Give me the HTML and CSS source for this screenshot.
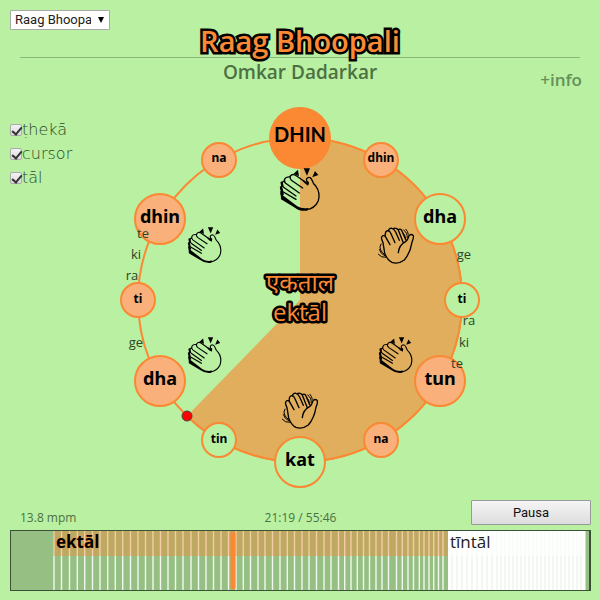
FILE: index.html
```html
<!DOCTYPE html>
<html lang="es">
<head>
<meta charset="utf-8">
<title>Raag Bhoopali</title>
<link rel="stylesheet" href="styles.css">
</head>
<body>
<header class="header">
  <div class="picker">
    <select class="picker-select" aria-label="Raag">
      <option>Raag Bhoopali</option>
    </select>
  </div>
  <h1 class="title">Raag Bhoopali</h1>
  <div class="credits">
    <h2 class="artist">Omkar Dadarkar</h2>
    <a class="info" href="#info">+info</a>
  </div>
</header>

<main class="stage">
  <div class="options">
    <label class="option"><input class="check" type="checkbox" checked>ṭhekā</label>
    <label class="option"><input class="check" type="checkbox" checked>cursor</label>
    <label class="option"><input class="check" type="checkbox" checked>tāl</label>
  </div>
  <svg class="wheel" viewBox="110 100 380 390" role="img" aria-label="ektāl">
    <defs>
      <g id="clap" class="hand">
        <path class="solid" d="M41 17L54 5L57 25ZM71 1H90L81 23ZM97 28L105 9L115 21Z"/>
        <path d="M84 48L50 24Q38 15 31 24Q28 31 34 37L68 60M31 27Q18 25 14 33Q11 41 17 46L58 75M14 38Q4 43 6 51Q8 56 14 60L48 84M6 54Q0 61 5 69L48 94M5 69Q1 76 6 84"/>
        <path class="thick" d="M5 44L7 53M3 58L6 67M4 72L8 78"/>
        <path d="M70 38Q83 55 84 44Q76 35 82 30Q91 24 97 38Q98 45 108 55Q122 74 115 98Q105 122 78 125"/>
        <path class="solid" d="M72 36L84 54L87 42L80 38L80 44ZM2 76L10 83L52 115Q66 124 86 120L83 128Q60 131 45 119L3 94Z"/>
      </g>
      <g id="wave" class="hand">
        <path d="M36 53L22 28Q15 23 11 30Q9 35 15 47L20 78Q28 100 42 106Q60 113 79 99Q97 78 102 46Q108 31 106 26Q100 19 93 26Q89 41 83 44Q63 54 61 77M22 29Q20 13 29 11Q35 10 38 18L51 47M31 12Q33 2 42 4Q48 5 53 15L64 40M45 5Q54 0 61 9L76 47M60 8Q70 3 73 14L84 40"/>
        <path class="fine" d="M9 51Q3 61 8 69Q12 77 19 82M4 68Q7 80 21 87M1 82Q10 93 23 91M77 9Q89 17 88 33M84 7Q90 13 91 22M73 15Q83 24 83 36"/>
      </g>
    </defs>
    <circle class="ring" cx="300" cy="300" r="162"/>
    <path class="elapsed" d="M300 300V138A162 162 0 1 1 187 416Z"/>
    <path class="ring" d="M300 138A162 162 0 1 1 187 416"/>

    <g class="nodes">
      <circle class="sam" cx="300" cy="138" r="31"/>
      <circle class="full" cx="381" cy="160" r="17"/>
      <circle class="empty" cx="440" cy="219" r="25"/>
      <circle class="empty" cx="462" cy="300" r="17"/>
      <circle class="full" cx="440" cy="381" r="25"/>
      <circle class="full" cx="381" cy="440" r="17"/>
      <circle class="empty" cx="300" cy="462" r="25"/>
      <circle class="empty" cx="219" cy="440" r="17"/>
      <circle class="full" cx="160" cy="381" r="25"/>
      <circle class="full" cx="138" cy="300" r="17"/>
      <circle class="full" cx="160" cy="219" r="25"/>
      <circle class="full" cx="219" cy="160" r="17"/>
    </g>

    <g class="bol strong">
      <text class="upper" x="300" y="142">DHIN</text>
      <text x="440" y="223">dha</text>
      <text x="440" y="385">tun</text>
      <text x="300" y="466">kat</text>
      <text x="160" y="385">dha</text>
      <text x="160" y="223">dhin</text>
    </g>
    <g class="bol weak">
      <text x="381" y="162">dhin</text>
      <text x="462" y="303">ti</text>
      <text x="381" y="443">na</text>
      <text x="219" y="443">tin</text>
      <text x="138" y="303">ti</text>
      <text x="219" y="162">na</text>
    </g>
    <g class="bol minor">
      <text x="464" y="259">ge</text>
      <text x="469" y="325">ra</text>
      <text x="464" y="347">ki</text>
      <text x="457" y="368">te</text>
      <text x="136" y="347">ge</text>
      <text x="132" y="280">ra</text>
      <text x="136" y="259">ki</text>
      <text x="143" y="238">te</text>
    </g>

    <use href="#clap" transform="translate(280 168) scale(.333)"/>
    <use href="#wave" transform="translate(378 227) scale(.333)"/>
    <use href="#clap" transform="translate(379 337) scale(.28)"/>
    <use href="#wave" transform="translate(282 392) scale(.333)"/>
    <use href="#clap" transform="translate(188 337) scale(.28)"/>
    <use href="#clap" transform="translate(188 227) scale(.28)"/>

    <g class="tal-name">
      <text x="300" y="291">एकताल</text>
      <text x="300" y="321">ektāl</text>
    </g>
    <circle class="cursor" cx="187" cy="416" r="5"/>
  </svg>
</main>

<footer class="player">
  <div class="status">
    <span class="tempo">13.8 mpm</span>
    <span class="time">21:19 / 55:46</span>
    <button class="pause" type="button">Pausa</button>
  </div>
  <div class="timeline">
    <svg class="cycles" viewBox="11 0 578 59" preserveAspectRatio="none" aria-hidden="true">
      <path class="cycle" d="M54 0v59M61.5 0v59M69.5 0v59M77.3 0v59M84.7 0v59M92.5 0v59M100 0v59M107.7 0v59M115.3 0v59M122.7 0v59M130.5 0v59M138 0v59M145.5 0v59M153 0v59M160.5 0v59M168 0v59M175.5 0v59M183 0v59M191 0v59M198.5 0v59M206 0v59M213.5 0v59M221 0v59M228.5 0v59M236 0v59M243.3 0v59M250.5 0v59M258 0v59M265 0v59M272.5 0v59M280 0v59M287.3 0v59M294.5 0v59M302 0v59M309 0v59M316.5 0v59M324 0v59M331 0v59M338.5 0v59M344.7 0v59M351 0v59M357.3 0v59M363.5 0v59M369.5 0v59M376 0v59M382 0v59M388.5 0v59M396.5 0v59M402.3 0v59M408 0v59M413.5 0v59M419.3 0v59M424 0v59M429 0v59M433.7 0v59M438.5 0v59M443 0v59"/>
      <path class="ektal-band" d="M53 0H448V25H53Z"/>
      <path class="tintal-area" d="M448 0H585.500V59H448Z"/>
      <path class="tintal-gap" d="M452 0v59M457 0v59M462 0v59M467 0v59M472 0v59M477 0v59M482 0v59M487 0v59M492 0v59M497 0v59M501 0v59M505 0v59M509 0v59M513 0v59M517 0v59M521 0v59M525 0v59M529 0v59M533 0v59M537 0v59M541 0v59M545 0v59M549 0v59M553 0v59M557 0v59M561 0v59M565 0v59M569 0v59M573 0v59M577 0v59M581 0v59"/>
      <path class="tintal-band" d="M448 0H585V25H448Z"/>
      <path class="playhead" d="M233 3V56"/>
    </svg>
    <span class="section current">ektāl</span>
    <span class="section">tīntāl</span>
  </div>
</footer>
</body>
</html>
```
FILE: styles.css
```css
:root {
  --green: #b9f0a2;
  --orange: #fb8833;
  --text: #4c7042;
}

* {
  box-sizing: border-box;
}

body {
  display: flex;
  flex-direction: column;
  min-height: 100vh;
  margin: 0;
  background: var(--green);
  color: var(--text);
  font-family: "Open Sans", "Noto Sans", sans-serif;
}

.header {
  padding: 10px 10px 0;
}

.picker {
  position: relative;
  width: 100px;
  height: 20px;
}

.picker-select {
  display: block;
  width: 100%;
  height: 20px;
  padding: 0 18px 0 4px;
  border: 1px solid #a9a9a9;
  border-radius: 1px;
  background: #fff;
  color: #222;
  font: 13px/18px Roboto, sans-serif;
  text-overflow: clip;
  appearance: none;
}

.picker::after {
  content: "";
  position: absolute;
  top: 7px;
  right: 6px;
  border: 3px solid transparent;
  border-top: 6px solid #000;
  border-bottom: 0;
  pointer-events: none;
}

.title {
  position: relative;
  height: 28px;
  margin: 0 10px;
  border-bottom: 1px solid #8bb67a;
  color: var(--orange);
  font: 600 29px/22px "Open Sans", sans-serif;
  text-align: center;
  -webkit-text-stroke: 5px #000;
  paint-order: stroke fill;
}

.credits {
  display: grid;
  grid-template-columns: 1fr auto 1fr;
  padding: 0 8px;
}

.artist {
  grid-column: 2;
  margin: 0;
  font-size: 19px;
  line-height: 28px;
  font-weight: 600;
}

.info {
  justify-self: end;
  padding-top: 8px;
  color: #65905a;
  font-size: 17px;
  line-height: 28px;
  font-weight: 600;
  text-decoration: none;
}

.stage {
  display: grid;
  grid-template-columns: 1fr minmax(0, 380px) 1fr;
  flex: 1;
}

.options {
  padding: 24px 0 0 10px;
}

.option {
  display: flex;
  align-items: center;
  height: 24px;
  color: #2c4a26;
  font: 200 16px/24px "DejaVu Sans", sans-serif;
}

.check {
  position: relative;
  flex: none;
  width: 12px;
  height: 12px;
  margin: 0;
  border: 1px solid #aaa;
  border-radius: 2px;
  background: linear-gradient(#f2f2f2, #ddd);
  appearance: none;
}

.check:checked::after {
  content: "";
  position: absolute;
  top: 0;
  left: 3px;
  width: 4px;
  height: 8px;
  border: solid #333;
  border-width: 0 2px 2px 0;
  transform: rotate(40deg);
}

.wheel {
  display: block;
  width: 100%;
  margin-top: 6px;
}

.ring {
  fill: none;
  stroke: var(--orange);
  stroke-width: 2;
}

.elapsed {
  fill: #e0ae5c;
}

.nodes {
  stroke: var(--orange);
  stroke-width: 2;
}

.sam {
  fill: var(--orange);
  stroke: none;
}

.full {
  fill: #f9b07a;
}

.empty {
  fill: var(--green);
}

.bol {
  fill: #000;
  text-anchor: middle;
}

.strong {
  font: 700 18px "Noto Sans", sans-serif;
}

.upper {
  font-family: Lato, sans-serif;
  font-size: 20px;
}

.weak {
  font: 700 12px "Noto Sans", sans-serif;
}

.minor {
  fill: #2c4428;
  font: 400 13px "Open Sans", sans-serif;
}

.hand {
  fill: none;
  stroke: #000;
  stroke-width: 4;
  stroke-linecap: round;
  stroke-linejoin: round;
}

.solid {
  fill: #000;
  stroke: none;
}

.thick {
  stroke-width: 7;
}

.fine {
  stroke-width: 3;
}

.tal-name {
  fill: var(--orange);
  stroke: #000;
  stroke-width: 5px;
  stroke-linejoin: round;
  paint-order: stroke;
  font: 400 24px "Open Sans", "Noto Sans Devanagari", sans-serif;
  text-anchor: middle;
}

.cursor {
  fill: #f00;
  stroke: #444;
}

.player {
  padding: 0 9px 9px 10px;
}

.status {
  display: grid;
  grid-template-columns: 1fr auto 1fr;
  align-items: start;
  height: 30px;
}

.tempo,
.time {
  padding-top: 6px;
  font-size: 12px;
  line-height: 24px;
}

.tempo {
  padding-left: 10px;
}

.pause {
  justify-self: end;
  width: 120px;
  height: 25px;
  padding: 0;
  border: 1px solid #999;
  border-radius: 1px;
  background: linear-gradient(#f5f5f5, #ddd);
  color: #111;
  font: 13px Roboto, sans-serif;
}

.timeline {
  position: relative;
  display: grid;
  grid-template-columns: 43fr 394fr 141fr;
  height: 61px;
  border: 1px solid #3c5236;
  border-right-width: 2px;
  background: #96c083;
}

.cycles {
  position: absolute;
  inset: 0;
  width: 100%;
  height: 100%;
}

.cycle {
  fill: none;
  stroke: #f0f8ed;
  stroke-width: 1.4;
}

.ektal-band {
  fill: #fb8833;
  fill-opacity: .4;
}

.tintal-area {
  fill: #fff;
}

.tintal-gap {
  stroke: #f3f7f1;
  stroke-width: 2;
}

.tintal-band {
  fill: #fff;
  fill-opacity: .6;
}

.playhead {
  stroke: var(--orange);
  stroke-width: 5;
  stroke-linecap: round;
}

.section {
  position: relative;
  padding-left: 2px;
  color: #222;
  font-size: 17px;
  line-height: 22px;
}

.current {
  grid-column: 2;
  color: #000;
  font-weight: 700;
  text-shadow: 0 0 2px var(--orange);
}
```
